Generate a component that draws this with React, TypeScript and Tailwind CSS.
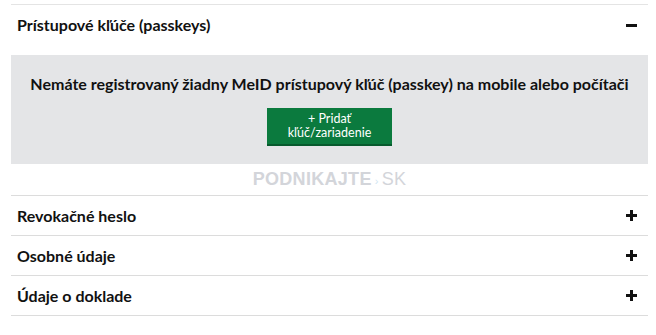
import React from "react";

function Minus() {
  return <span className="block w-[11px] h-[3px] bg-[#111]" />;
}
function Plus() {
  return (
    <span className="relative block w-[11px] h-[11px]">
      <span className="absolute left-0 top-[4px] w-[11px] h-[3px] bg-[#111]" />
      <span className="absolute top-0 left-[4px] w-[3px] h-[11px] bg-[#111]" />
    </span>
  );
}

function Row({ title }: { title: string }) {
  return (
    <div className="flex items-center justify-between h-[40px] border-b border-[#dcdcdc] pl-[6px] pr-[11px]">
      <span className="text-[16px] font-bold text-[#111]">{title}</span>
      <Plus />
    </div>
  );
}

export default function App() {
  return (
    <div className="w-[656px] h-[335px] bg-white pt-[4px]" style={{ fontFamily: "Lato, 'Noto Sans', sans-serif" }}>
      <div className="mx-[11px] w-[637px] border-t border-[#e4e4e4]">
        <div className="flex items-center justify-between h-[50px] pl-[6px] pr-[11px] pb-[10px]">
          <span className="text-[16px] font-bold text-[#111]">Prístupové kľúče (passkeys)</span>
          <Minus />
        </div>
        <div className="bg-[#e4e5e7] h-[109px] flex flex-col items-center pt-[18px]">
          <p className="text-[16px] font-bold text-[#111] leading-[22px]">
            Nemáte registrovaný žiadny MeID prístupový kľúč (passkey) na mobile alebo počítači
          </p>
          <button className="mt-[13px] w-[125px] h-[38px] bg-[#0b7a3e] border-b-2 border-[#075a2d] text-white text-[12.5px] leading-[14px] flex flex-col items-center justify-center">
            <span>+ Pridať</span>
            <span>kľúč/zariadenie</span>
          </button>
        </div>
        <div className="h-[32px] flex items-center justify-center border-b border-[#dcdcdc]">
          <span className="text-[18px] font-black tracking-[0.3px] text-[#d3d5da]" style={{ fontFamily: "'Liberation Sans', sans-serif" }}>
            PODNIKAJTE<span className="font-normal text-[11px] mx-[3px] text-[#cfe6f2]">›</span><span className="font-normal">SK</span>
          </span>
        </div>
        <Row title="Revokačné heslo" />
        <Row title="Osobné údaje" />
        <Row title="Údaje o doklade" />
      </div>
    </div>
  );
}
